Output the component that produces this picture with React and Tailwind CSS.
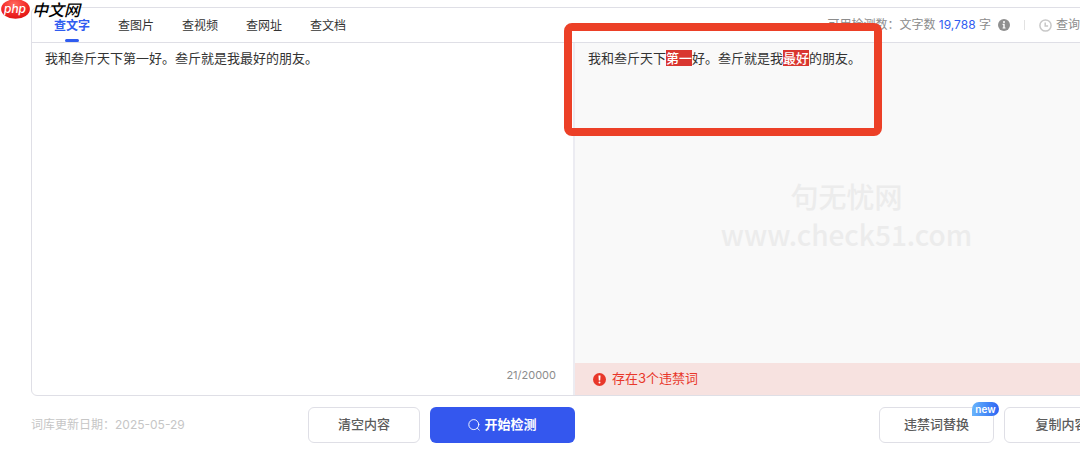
import { useState } from "react";

const TABS = ["查文字", "查图片", "查视频", "查网址", "查文档"];

function Logo() {
  return (
    <div className="absolute left-0 top-0 z-20 flex items-center gap-px">
      <svg viewBox="0 0 30 20" className="h-5 w-[31px]" role="img" aria-label="php">
        <defs>
          <radialGradient id="logoRed" cx="0.45" cy="0.25" r="0.8">
            <stop offset="0" stopColor="#ff6a60" />
            <stop offset="0.5" stopColor="#f5302c" />
            <stop offset="1" stopColor="#dd1010" />
          </radialGradient>
        </defs>
        <ellipse cx="15" cy="9" rx="14.4" ry="9.8" fill="url(#logoRed)" />
        <text
          x="14.5"
          y="12.5"
          textAnchor="middle"
          fontFamily="Inter, sans-serif"
          fontStyle="italic"
          fontWeight="500"
          fontSize="12"
          fill="#fff"
        >
          php
        </text>
      </svg>
      <span className="text-base font-medium italic leading-[18px] text-black">中文网</span>
    </div>
  );
}

function InfoIcon() {
  return (
    <svg viewBox="0 0 12 12" className="size-3 shrink-0" aria-hidden="true">
      <circle cx="6" cy="6" r="6" fill="#8f8f8f" />
      <circle cx="6" cy="3" r="1" fill="#fff" />
      <path d="M4.6 4.8h2.1v3.7h.8v1.1H4.6V8.5h.7V5.9h-.7z" fill="#fff" />
    </svg>
  );
}

function ClockIcon() {
  return (
    <svg viewBox="0 0 13 13" className="size-[13px] shrink-0" fill="none" stroke="#c8c8c8" strokeWidth="1.5" aria-hidden="true">
      <circle cx="6.5" cy="6.5" r="5.6" />
      <path d="M6.2 3.6v3.3h2.9" />
    </svg>
  );
}

function AlertIcon() {
  return (
    <svg viewBox="0 0 13 13" className="size-[13px] shrink-0" aria-hidden="true">
      <circle cx="6.5" cy="6.5" r="6.5" fill="#e8372a" />
      <path d="M5.5 2.5h2l-.3 5h-1.4z" fill="#fff" />
      <circle cx="6.5" cy="9.5" r="1" fill="#fff" />
    </svg>
  );
}

function SearchIcon() {
  return (
    <svg viewBox="0 0 12 12" className="size-3 shrink-0" fill="none" stroke="#fff" strokeWidth="0.9" strokeLinecap="round" aria-hidden="true">
      <circle cx="5.8" cy="5.6" r="5" />
      <path d="M9.4 9.2l1.9 2" />
    </svg>
  );
}

function Mark({ children }) {
  return <mark className="bg-[#d93630] font-medium text-white">{children}</mark>;
}

function OutlineButton({ className, children }) {
  return (
    <button
      type="button"
      className={`relative h-9 rounded-md border border-[#dfdfe6] bg-white text-[13px] font-medium text-[#5c5c5c] ${className}`}
    >
      {children}
    </button>
  );
}

export default function App() {
  const [active, setActive] = useState(0);
  const [text, setText] = useState("我和叁斤天下第一好。叁斤就是我最好的朋友。");

  return (
    <div className="relative overflow-hidden bg-white pb-4 pl-[31px] pt-[7px] font-['Inter','Noto_Sans_CJK_SC',sans-serif] text-[#333]">
      <Logo />

      <div className="-mr-[39px]">
        <main className="rounded-md border border-[#dfdfe6]">
          <header className="flex h-[35px] items-center justify-between border-b border-[#dfdfe6] pl-[22px] pr-3.5">
            <nav className="flex h-full gap-7" aria-label="检测类型">
              {TABS.map((tab, i) => (
                <button
                  key={tab}
                  type="button"
                  onClick={() => setActive(i)}
                  className={`relative h-full pt-0.5 text-xs ${i === active ? "font-bold text-[#2f5cf0]" : "text-[#333]"}`}
                >
                  {tab}
                  {i === active && (
                    <span className="absolute bottom-0 left-1/2 h-[3px] w-3.5 -translate-x-1/2 rounded-full bg-[#2f5cf0]" />
                  )}
                </button>
              ))}
            </nav>
            <div className="flex items-center text-xs text-[#8c8c8c]">
              <span>
                可用检测数：文字数 <span className="text-[#2f5cf0]">19,788</span> 字
              </span>
              <span className="ml-[7px]">
                <InfoIcon />
              </span>
              <span className="mx-3.5 h-2.5 w-px bg-[#e2e2e2]" />
              <a href="#history" className="flex items-center gap-1">
                <ClockIcon />
                查询记录
              </a>
            </div>
          </header>

          <div className="grid h-[352px] grid-cols-2">
            <section className="flex flex-col border-r-2 border-[#ececf2]">
              <textarea
                aria-label="检测文字"
                value={text}
                onChange={(e) => setText(e.target.value)}
                className="w-full flex-1 resize-none bg-transparent px-[13px] py-[5px] text-[13px] leading-5 outline-none"
              />
              <p className="px-[17px] pb-3 text-right text-[11px] leading-4 text-[#8c8c8c]">{text.length}/20000</p>
            </section>

            <section className="flex flex-col bg-[#f9f9f9]">
              <p className="px-[13px] py-[5px] text-[13px] leading-5">
                我和叁斤天下<Mark>第一</Mark>好。叁斤就是我<Mark>最好</Mark>的朋友。
              </p>
              <div className="flex flex-1 flex-col items-center justify-center pb-1.5 font-['Noto_Sans_CJK_SC',sans-serif] text-[28px] font-medium leading-[38px] text-[#ececec]">
                <span>句无忧网</span>
                <span>www.check51.com</span>
              </div>
              <div className="flex h-8 items-center gap-1.5 rounded-br-md bg-[#f7e2e0] px-[18px] text-[13px] text-[#e8372a]">
                <AlertIcon />
                存在3个违禁词
              </div>
            </section>
          </div>
        </main>

        <footer className="mt-[11px] grid grid-cols-2">
          <div className="flex items-center justify-between">
            <span className="text-xs text-[#c6c6c6]">词库更新日期：2025-05-29</span>
            <div className="flex gap-2.5">
              <OutlineButton className="w-28">清空内容</OutlineButton>
              <button
                type="button"
                className="flex h-9 w-[145px] items-center justify-center gap-1 rounded-md bg-[#3457ee] text-[13px] font-bold text-white"
              >
                <SearchIcon />
                开始检测
              </button>
            </div>
          </div>
          <div className="flex items-center justify-end gap-2.5">
            <OutlineButton className="w-[115px]">
              违禁词替换
              <span className="absolute -right-1.5 -top-1.5 flex h-3.5 w-[27px] items-center justify-center rounded-full rounded-bl-none bg-linear-to-r from-[#69b4fb] to-[#2f62f2] text-[10px] font-semibold text-white">
                new
              </span>
            </OutlineButton>
            <OutlineButton className="w-[115px]">复制内容</OutlineButton>
          </div>
        </footer>
      </div>

      <div className="pointer-events-none absolute left-[564px] top-[23px] z-10 h-[113px] w-[318px] rounded-lg border-8 border-[#ec4027]" />
    </div>
  );
}
